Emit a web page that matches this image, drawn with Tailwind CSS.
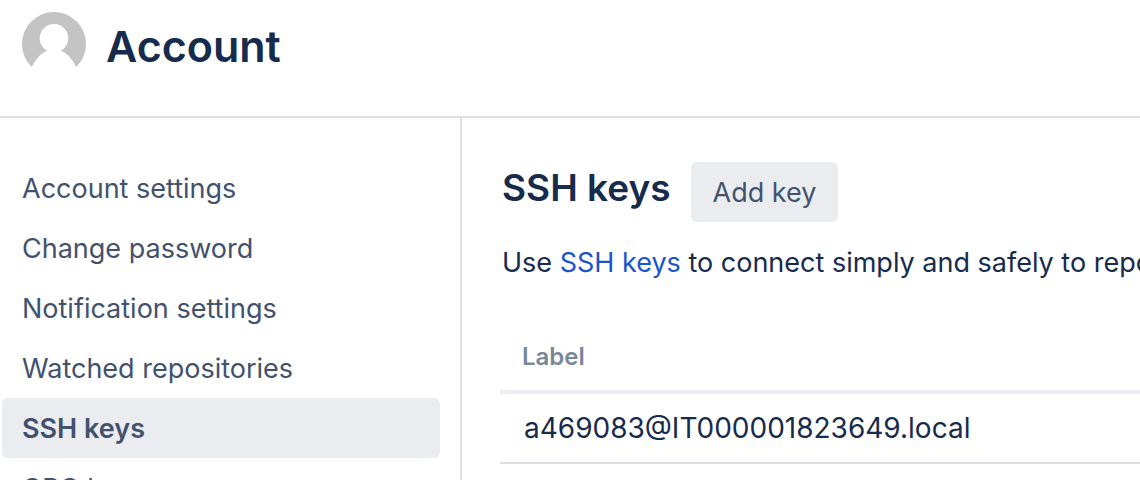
<!DOCTYPE html>
<html lang="en">
<head>
<meta charset="utf-8">
<title>Account</title>
<script src="https://cdn.jsdelivr.net/npm/@tailwindcss/browser@4"></script>
</head>
<body class="flex h-screen flex-col overflow-hidden bg-white font-['Inter',sans-serif] text-[27px] leading-[42px] text-[#172b4d]">
  <header class="flex h-[118px] shrink-0 items-start gap-5 border-b-2 border-[#dfe0e5] px-[22px] pt-3">
    <svg class="size-16 shrink-0" viewBox="0 0 64 64" aria-hidden="true">
      <path d="M9.8 55A32 32 0 1 1 54.2 55C50.5 47.5 45.5 41.5 38.8 38.8A14.3 14.3 0 1 0 25.2 38.8C18.5 41.5 13.5 47.5 9.8 55Z" fill="#c4c4c4"/>
    </svg>
    <h1 class="pt-1 text-[43px] leading-[60px] font-semibold">Account</h1>
  </header>
  <div class="flex min-h-0 grow">
    <nav class="flex w-[462px] shrink-0 flex-col border-r-2 border-[#dfe0e5] pt-10 pr-5 pl-[2px] text-[#42526e]" aria-label="Account">
      <a href="#" class="flex h-[60px] shrink-0 items-center px-5 pt-0.5">Account settings</a>
      <a href="#" class="flex h-[60px] shrink-0 items-center px-5 pt-0.5">Change password</a>
      <a href="#" class="flex h-[60px] shrink-0 items-center px-5 pt-0.5">Notification settings</a>
      <a href="#" class="flex h-[60px] shrink-0 items-center px-5 pt-0.5">Watched repositories</a>
      <a href="#" class="flex h-[60px] shrink-0 items-center rounded-md bg-[#ebecf0] px-5 pt-0.5 font-semibold" aria-current="page">SSH keys</a>
      <a href="#" class="flex h-[60px] shrink-0 items-center px-5 pt-0.5">GPG keys</a>
    </nav>
    <main class="min-w-0 grow overflow-hidden pt-11 pl-[38px]">
      <div class="flex items-start gap-5 pl-[2px]">
        <h2 class="text-[37px] leading-[52px] font-semibold">SSH keys</h2>
        <button type="button" class="h-[60px] rounded-md bg-[#ebecf0] px-[22px] pt-0.5 text-[#42526e]">Add key</button>
      </div>
      <p class="mt-5 pl-[2px] whitespace-nowrap">Use <a href="#" class="text-[#1a54cc]">SSH keys</a> to connect simply and safely to repositories.</p>
      <table class="mt-11 w-full border-separate border-spacing-0 text-left">
        <thead>
          <tr><th class="border-b-4 border-[#ebecf0] px-[22px] pt-2 pb-3 text-[24px] font-semibold text-[#7a869a]">Label</th></tr>
        </thead>
        <tbody>
          <tr><td class="h-[70px] border-b-2 border-[#dfe0e5] px-6 text-[28px]">a469083@IT000001823649.local</td></tr>
        </tbody>
      </table>
    </main>
  </div>
</body>
</html>
